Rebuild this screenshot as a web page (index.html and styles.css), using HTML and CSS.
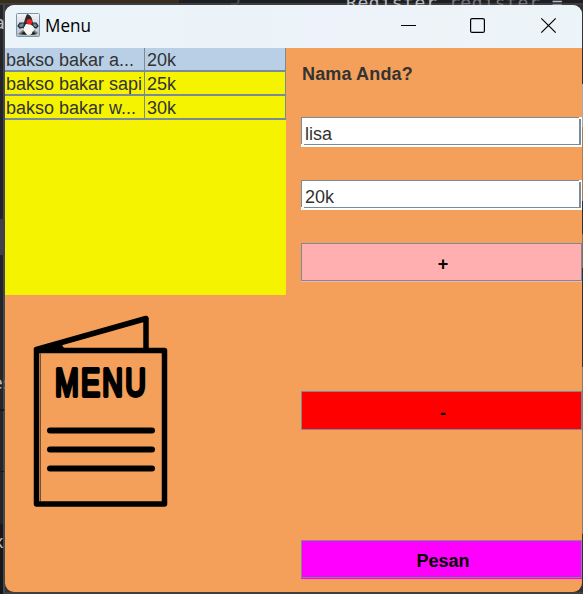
FILE: index.html
```html
<!DOCTYPE html>
<html lang="id">
<head>
<meta charset="utf-8">
<title>Menu</title>
<link rel="stylesheet" href="styles.css">
</head>
<body>
<div class="editor">
  <i class="patch patch-brown"></i><i class="patch patch-tab"></i><i class="patch patch-row"></i><i class="patch patch-foot"></i>
  <i class="patch edge-light"></i><i class="patch edge-tan"></i><i class="patch edge-mid"></i><i class="patch edge-low"></i>
  <span class="code code-a">a</span>
  <span class="code code-es">es</span>
  <span class="code code-x">x</span>
  <span class="code code-num">5</span>
  <span class="code code-reg">Register <b>register</b> =</span>
</div>
<main class="window">
  <header class="titlebar">
    <svg class="app-icon" viewBox="0 0 24 24">
      <defs><linearGradient id="g" x1="0" y1="0" x2="0" y2="1"><stop offset="0" stop-color="#f4f6f8"/><stop offset="1" stop-color="#b4bdc7"/></linearGradient></defs>
      <rect x=".5" y=".5" width="23" height="23" rx="1" fill="url(#g)" stroke="#7895b2"/>
      <path d="M9 10 4 10 2 13 4 15 8 14M16 10 20 10 22 13 20 15 16 13" fill="#65849d" stroke="#222" stroke-width="1.200"/>
      <path d="M2 21 7 17 18 17 22 20 19 22 5 22Z" fill="#777"/>
      <path d="M9 11Q7 18 8 21L12 22 17 21Q19 15 16 9Z" fill="#f7f7f5"/>
      <path d="M11 1Q15 2 16 6L18 14 14 11 10 11 7 16Q8 7 11 1Z" fill="#292a2c"/>
      <circle cx="13.300" cy="8.800" r="2.800" fill="#ef2424"/>
      <path d="M5 21 8 18 11 22M15 22 17 18 20 21" fill="#222"/>
    </svg>
    <h1 class="title">Menu</h1>
    <svg class="controls" viewBox="0 0 158 20" fill="none" stroke="#000">
      <path d="M1 10.500h15" stroke-width="1"/>
      <rect x="70.600" y="3.600" width="13.800" height="13.800" rx="1.500" stroke-width="1.200"/>
      <path d="M141.300 3.300l14.400 14.400M155.700 3.300l-14.400 14.400" stroke-width="1.200"/>
    </svg>
  </header>
  <div class="content">
    <section class="left">
      <div class="table">
        <div class="row selected"><span>bakso bakar a...</span><span>20k</span></div>
        <div class="row"><span>bakso bakar sapi</span><span>25k</span></div>
        <div class="row"><span>bakso bakar w...</span><span>30k</span></div>
      </div>
      <svg class="menu-card" viewBox="0 0 136 194" fill="none" stroke="#000" stroke-linejoin="round" stroke-linecap="round">
        <path d="M7.500 40v147" stroke="#7a4f2d" stroke-width="1"/>
        <path d="M3.500 36.500h128v153.500h-128z" stroke-width="5.500"/>
        <path d="M3.500 35.500 113 4.500v30" stroke-width="5.500"/>
        <path d="M4 34 27 28 31 34z" fill="#000" stroke="none"/>
        <path d="M17 116.500h102M17 135.500h102M17 154.500h102" stroke-width="6"/>
        <text class="card-title" x="22" y="82" textLength="93" lengthAdjust="spacingAndGlyphs">MENU</text>
      </svg>
    </section>
    <section class="form">
      <label class="question">Nama Anda?</label>
      <div class="field"><span>lisa</span></div>
      <div class="field price"><span>20k</span></div>
      <button class="btn plus">+</button>
      <button class="btn minus">-</button>
      <button class="btn order">Pesan</button>
    </section>
  </div>
</main>
</body>
</html>
```
FILE: styles.css
```css
* { box-sizing: border-box; }
body {
  margin: 0;
  width: 583px;
  height: 594px;
  overflow: hidden;
  position: relative;
  background: #242528;
  font-family: "Liberation Sans", Arial, sans-serif;
  padding: 5px 1px 2px 5px;
}
.editor {
  position: absolute;
  inset: 0;
  overflow: hidden;
  background: linear-gradient(#1e1f22 0 3px, #3d3e40 3px 5px, transparent 5px 592px, #3d4043 592px), linear-gradient(90deg, #242528 3px, #45474a 3px 5px, #303234 5px);
}
.patch { position: absolute; }
.patch-brown { left: 0; top: 0; width: 179px; height: 3px; background: #3a2c1c; }
.patch-tab { left: 0; top: 219px; width: 5px; height: 36px; background: #414249; }
.patch-row { left: 0; top: 409px; width: 4px; height: 63px; border: solid #19191b; border-width: 2px 0 1px; }
.patch-foot { left: 0; top: 524px; width: 3px; height: 70px; background: #171719; }
.edge-light { left: 582px; top: 84px; width: 1px; height: 43px; background: #a5a9ad; }
.edge-tan { left: 582px; top: 127px; width: 1px; height: 74px; background: #a88058; }
.edge-mid { left: 582px; top: 234px; width: 1px; height: 34px; background: #8c6b50; }
.edge-low { left: 582px; top: 367px; width: 1px; height: 167px; background: #8b7966; }
.code {
  position: absolute;
  font: 18px/20px "DejaVu Sans Mono", monospace;
  color: #b9bbc0;
  white-space: pre;
}
.code b { font-weight: normal; color: #74767b; }
.code-a { left: -6px; top: 13px; }
.code-es { left: -8px; top: 373px; }
.code-x { left: -7px; top: 532px; }
.code-num { left: 230px; top: -11px; color: #4b5059; }
.code-reg { left: 346px; top: -7px; letter-spacing: .6px; }
.window {
  position: relative;
  width: 577px;
  height: 587px;
  border-radius: 9px;
  overflow: hidden;
  background: #f4a05a;
  display: flex;
  flex-direction: column;
}
.titlebar {
  height: 43px;
  flex: none;
  display: flex;
  align-items: center;
  padding: 0 24px 0 11px;
  background: linear-gradient(90deg, #ebf4f8 0, #ebf3f8 45%, #eef3fb 56%, #eef3f8 75%, #ebf4f8);
}
.app-icon { width: 24px; height: 24px; margin-top: -3px; }
.title {
  margin: -3px auto 0 5px;
  font: 18px/24px "Open Sans", "Noto Sans", sans-serif;
  color: #000;
  transform-origin: left;
  transform: scaleX(.95);
}
.controls { width: 158px; height: 20px; margin-top: -3px; }
.content { flex: 1; display: grid; grid-template-columns: 281px 281px; column-gap: 15px; }
.table { height: 247px; background: #f6f300; }
.row {
  display: grid;
  grid-template-columns: 140px 141px;
  height: 24px;
  border-bottom: 2px solid #7a8a99;
  font-size: 18px;
  line-height: 24px;
  color: #333;
}
.row span { border-right: 1px solid #7a8a99; padding-left: 1px; white-space: nowrap; height: 22px; }
.row span + span { padding-left: 2px; }
.selected { background: #b8cfe5; }
.menu-card { display: block; width: 136px; height: 194px; margin: 19px 0 0 28px; }
.card-title { font: 38px "Liberation Sans Narrow", "Liberation Sans", Arial, sans-serif; fill: #000; stroke: #000; stroke-width: 3.800px; letter-spacing: 3px; }
.form { display: flex; flex-direction: column; }
.question { height: 69px; padding: 16px 0 0 1px; font-size: 18px; line-height: 20px; font-weight: bold; color: #333; letter-spacing: .15px; }
.field {
  position: relative;
  height: 30px;
  flex: none;
  background: #fff;
  padding: 6px 0 0 4px;
  font-size: 18px;
  line-height: 22px;
  color: #333;
}
.field::before, .field::after { content: ""; position: absolute; border: solid #7a8a99; }
.field::before { inset: 0 3px 3px 0; border-width: 1px 0 0 1px; }
.field::after { inset: 2px 1px 2px 3px; border-width: 0 2px 1px 0; }
.price { margin-top: 33px; }
.btn {
  display: block;
  width: 281px;
  height: 38px;
  flex: none;
  padding: 3px 0 0 3px;
  border: 1px solid #7a8a99;
  border-radius: 0;
  font: bold 18px/20px "Liberation Sans", Arial, sans-serif;
  color: #000;
}
.plus { margin-top: 33px; background: #ffafaf; box-shadow: 0 1px #ffafaf; }
.minus { margin-top: 110px; height: 39px; padding-top: 5px; background: #f00; }
.order { margin-top: 110px; background: #f0f; box-shadow: 0 1px #f0f; }
```
